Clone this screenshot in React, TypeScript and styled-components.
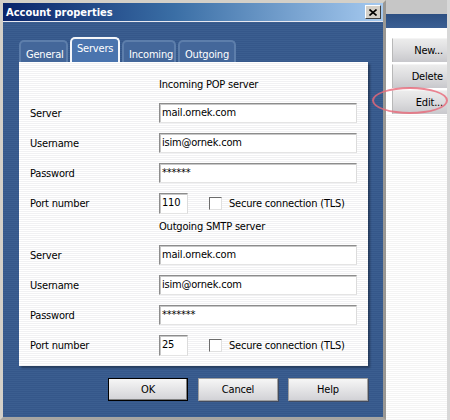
import { createGlobalStyle, styled } from "styled-components";

const GlobalStyle = createGlobalStyle`
  html, body {
    margin: 0;
    padding: 0;
    background: #ffffff;
  }
  body {
    font-family: "DejaVu Sans Condensed", "DejaVu Sans", "Liberation Sans", sans-serif;
    font-size: 11px;
    letter-spacing: -0.2px;
    color: #000;
  }
`;

const Screen = styled.div`
  position: relative;
  width: 450px;
  height: 420px;
  display: flex;
  overflow: hidden;
`;

const Window = styled.div`
  width: 386px;
  height: 420px;
  box-sizing: border-box;
  background: #d4d0c8;
  border: 3px solid #d4d0c8;
  border-right-color: #9a9894;
  border-bottom-color: #a8a6a2;
  display: flex;
  flex-direction: column;
`;

const TitleBar = styled.div`
  height: 18px;
  flex: none;
  display: flex;
  align-items: center;
  justify-content: space-between;
  padding: 0 2px 0 3px;
  background: linear-gradient(90deg, #0a246a 0%, #3a6ea5 45%, #a6caf0 100%);
  border-bottom: 1px solid #e8e8f0;
`;

const Title = styled.span`
  color: #fff;
  font-weight: bold;
  font-size: 11px;
  letter-spacing: 0;
`;

const CloseButton = styled.div`
  width: 16px;
  height: 14px;
  box-sizing: border-box;
  background: #d4d0c8;
  border: 1px solid;
  border-color: #fff #404040 #404040 #fff;
  display: flex;
  align-items: center;
  justify-content: center;
`;

const Body = styled.div`
  flex: 1;
  display: flex;
  flex-direction: column;
  padding: 15px 15px 15px 16px;
  background: repeating-linear-gradient(
    180deg,
    #3b5e90 0px,
    #3b5e90 1px,
    #35578a 1px,
    #35578a 2px
  );
`;

const Tabs = styled.div`
  display: flex;
  align-items: flex-end;
  gap: 2px;
  height: 25px;
`;

const Tab = styled.div<{ $active?: boolean; $w: number }>`
  box-sizing: border-box;
  height: ${(p) => (p.$active ? 25 : 22)}px;
  width: ${(p) => p.$w}px;
  padding: ${(p) => (p.$active ? "3px 0 0 5px" : "6px 0 0 5px")};
  color: #fff;
  border-radius: 5px 5px 0 0;
  background: ${(p) => (p.$active ? "#4a74ae" : "#44679a")};
  border: ${(p) => (p.$active ? "2px solid #f4f6fa" : "2px solid #5d7eab")};
  border-bottom: none;
`;

const Panel = styled.div`
  box-sizing: border-box;
  height: 304px;
  padding: 15px 11px 0 11px;
  display: flex;
  flex-direction: column;
  background: repeating-linear-gradient(
    180deg,
    #ffffff 0px,
    #ffffff 1px,
    #f1f1f3 1px,
    #f1f1f3 2px
  );
  box-shadow: 2px 2px 2px rgba(0, 0, 0, 0.35);
`;

const Heading = styled.div<{ $top?: number }>`
  height: 16px;
  line-height: 16px;
  margin-top: ${(p) => p.$top ?? 0}px;
  margin-bottom: 10px;
  padding-left: 129px;
`;

const Row = styled.div`
  display: grid;
  grid-template-columns: 129px 1fr;
  align-items: center;
  height: 20px;
  margin-bottom: 10px;
  &:last-child {
    margin-bottom: 0;
  }
`;

const Label = styled.span`
  padding-left: 0;
`;

const Field = styled.div<{ $w?: number; $short?: boolean }>`
  box-sizing: border-box;
  height: ${(p) => (p.$short ? 21 : 20)}px;
  width: ${(p) => (p.$w ? `${p.$w}px` : "100%")};
  background: #fff;
  border: 1px solid;
  border-color: #8c8c8c #dcdcdc #e4e4e4 #8c8c8c;
  box-shadow: inset 1px 1px 0 #c8c8c8;
  padding: 1px 0 0 2px;
  line-height: 16px;
  white-space: nowrap;
  overflow: hidden;
`;

const PortLine = styled.div`
  display: flex;
  align-items: center;
`;

const Check = styled.div`
  box-sizing: border-box;
  width: 13px;
  height: 13px;
  margin: 0 7px 0 21px;
  background: #fff;
  border: 1px solid;
  border-color: #6c6c6c #e0e0e0 #e0e0e0 #6c6c6c;
`;

const Footer = styled.div`
  display: flex;
  justify-content: flex-end;
  gap: 10px;
  margin-top: 12px;
`;

const Button = styled.div<{ $default?: boolean }>`
  box-sizing: border-box;
  width: 80px;
  height: 23px;
  display: flex;
  align-items: center;
  justify-content: center;
  background: linear-gradient(180deg, #f6f6f6 0%, #e4e4e6 50%, #d2d2d6 100%);
  border: 1px solid ${(p) => (p.$default ? "#000" : "#a0a0a0")};
  box-shadow: ${(p) =>
    p.$default ? "inset -1px -1px 0 #808080" : "1px 1px 0 #404a60"};
`;

const Backdrop = styled.div`
  flex: 1;
  display: flex;
  flex-direction: column;
  background: repeating-linear-gradient(
    180deg,
    #ffffff 0px,
    #ffffff 1px,
    #f4f4f4 1px,
    #f4f4f4 2px
  );
  border-right: 3px solid #d8d8d8;
`;

const BackTop = styled.div`
  height: 14px;
  background: #c6c6c6;
`;

const BackBand = styled.div`
  height: 14px;
  background: linear-gradient(180deg, #2d4f82, #3b5f93);
`;

const BackList = styled.div`
  display: flex;
  flex-direction: column;
  gap: 2px;
  padding: 10px 0 0 6px;
  background: #fff;
`;

const SideButton = styled.div`
  height: 24px;
  box-sizing: border-box;
  display: flex;
  align-items: center;
  justify-content: flex-end;
  padding-right: 4px;
  background: linear-gradient(180deg, #ececec 0%, #dcdcde 50%, #c8c8cc 100%);
  border-top: 1px solid #f4f4f4;
  border-left: 1px solid #b8b8b8;
`;

const Highlight = styled.div`
  position: absolute;
  left: 372px;
  top: 87px;
  width: 76px;
  height: 27px;
  box-sizing: border-box;
  border: 2px solid rgba(232, 104, 120, 0.8);
  border-radius: 50%;
  pointer-events: none;
`;

function CloseIcon() {
  return (
    <svg width="8" height="7" viewBox="0 0 8 7">
      <path d="M0.5 0.5 L7.5 6.5 M7.5 0.5 L0.5 6.5" stroke="#000" strokeWidth="1.6" />
    </svg>
  );
}

type Server = { title: string; user: string; pass: string; port: string };

const servers: Server[] = [
  { title: "Incoming POP server", user: "isim@ornek.com", pass: "******", port: "110" },
  { title: "Outgoing SMTP server", user: "isim@ornek.com", pass: "*******", port: "25" },
];

export default function App() {
  return (
    <>
      <GlobalStyle />
      <Screen>
        <Window>
          <TitleBar>
            <Title>Account properties</Title>
            <CloseButton>
              <CloseIcon />
            </CloseButton>
          </TitleBar>
          <Body>
            <Tabs>
              <Tab $w={49}>General</Tab>
              <Tab $w={50} $active>
                Servers
              </Tab>
              <Tab $w={54}>Incoming</Tab>
              <Tab $w={58}>Outgoing</Tab>
            </Tabs>
            <Panel>
              {servers.map((s, i) => (
                <div key={s.title}>
                  <Heading $top={i === 0 ? 0 : 6}>{s.title}</Heading>
                  <Row>
                    <Label>Server</Label>
                    <Field>mail.ornek.com</Field>
                  </Row>
                  <Row>
                    <Label>Username</Label>
                    <Field>{s.user}</Field>
                  </Row>
                  <Row>
                    <Label>Password</Label>
                    <Field>{s.pass}</Field>
                  </Row>
                  <Row>
                    <Label>Port number</Label>
                    <PortLine>
                      <Field $w={29} $short>
                        {s.port}
                      </Field>
                      <Check />
                      <span>Secure connection (TLS)</span>
                    </PortLine>
                  </Row>
                </div>
              ))}
            </Panel>
            <Footer>
              <Button $default>OK</Button>
              <Button>Cancel</Button>
              <Button>Help</Button>
            </Footer>
          </Body>
        </Window>
        <Backdrop>
          <BackTop />
          <BackBand />
          <BackList>
            <SideButton>New...</SideButton>
            <SideButton>Delete</SideButton>
            <SideButton>Edit...</SideButton>
          </BackList>
        </Backdrop>
        <Highlight />
      </Screen>
    </>
  );
}
